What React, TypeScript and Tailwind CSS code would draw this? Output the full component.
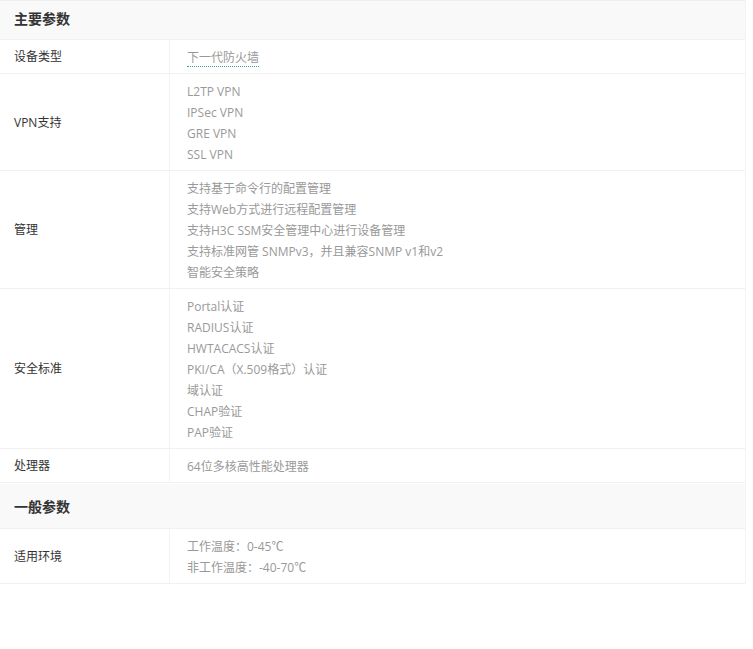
import React from 'react';

type Row = { label: string; values: string[]; dotted?: boolean };
type Section = { title: string; rows: Row[] };

const sections: Section[] = [
  {
    title: '主要参数',
    rows: [
      { label: '设备类型', values: ['下一代防火墙'], dotted: true },
      { label: 'VPN支持', values: ['L2TP VPN', 'IPSec VPN', 'GRE VPN', 'SSL VPN'] },
      {
        label: '管理',
        values: [
          '支持基于命令行的配置管理',
          '支持Web方式进行远程配置管理',
          '支持H3C SSM安全管理中心进行设备管理',
          '支持标准网管 SNMPv3，并且兼容SNMP v1和v2',
          '智能安全策略',
        ],
      },
      {
        label: '安全标准',
        values: [
          'Portal认证',
          'RADIUS认证',
          'HWTACACS认证',
          'PKI/CA（X.509格式）认证',
          '域认证',
          'CHAP验证',
          'PAP验证',
        ],
      },
      { label: '处理器', values: ['64位多核高性能处理器'] },
    ],
  },
  {
    title: '一般参数',
    rows: [{ label: '适用环境', values: ['工作温度：0-45℃', '非工作温度：-40-70℃'] }],
  },
];

const SpecRow = ({ row }: { row: Row }) => (
  <div className="flex border-b border-[#f1f1f1]">
    <div className="w-[170px] shrink-0 flex items-center pl-[14px] pt-[1px] text-[12px] text-[#333] border-r border-[#f3f3f3]">
      {row.label}
    </div>
    <div className="flex-1 pl-[17px] pt-[7px] pb-[5px] text-[12px] leading-[21px] text-[#999]">
      {row.values.map((v) => (
        <div key={v}>
          {row.dotted ? (
            <span className="border-b border-dotted border-[#3f9f97]">{v}</span>
          ) : (
            v
          )}
        </div>
      ))}
    </div>
  </div>
);

export default function App() {
  return (
    <div
      className="min-h-[649px] bg-white"
      style={{ fontFamily: '"Open Sans", "Noto Sans CJK SC", sans-serif' }}
    >
      <div className="w-[746px] border-r border-[#f4f4f4]">
        {sections.map((s, i) => (
          <div key={s.title}>
            <div
              className={`flex items-center pl-[14px] bg-[#f9f9f9] border-b border-[#f1f1f1] text-[14px] font-bold text-[#333] ${
                i === 0 ? 'h-[40px] pb-[3px] border-t border-t-[#eeeeee]' : 'h-[45px] mt-[1px] pt-[1px]'
              }`}
            >
              {s.title}
            </div>
            {s.rows.map((r) => (
              <SpecRow key={r.label} row={r} />
            ))}
          </div>
        ))}
      </div>
    </div>
  );
}
